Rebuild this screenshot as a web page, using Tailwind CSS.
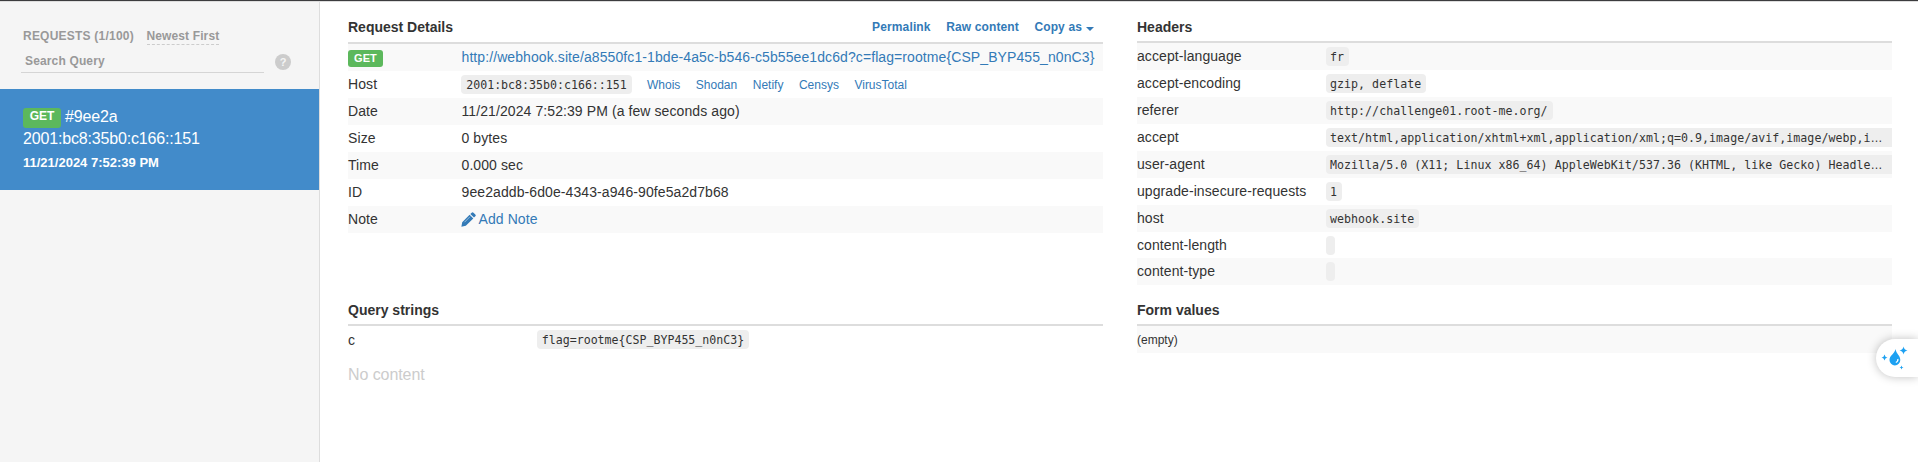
<!DOCTYPE html>
<html lang="en">
<head>
<meta charset="utf-8">
<title>Webhook requests</title>
<script src="https://cdn.jsdelivr.net/npm/@tailwindcss/browser@4"></script>
</head>
<body class="bg-white text-[#333] font-['Liberation_Sans',Arial,sans-serif] text-sm overflow-hidden">
<div class="h-[462px] flex flex-col border-t border-[#3c3c3e] relative overflow-hidden">
<div class="flex-1 flex border-t border-[#ddd]">
  <aside class="w-80 shrink-0 bg-[#f5f5f5] border-r border-[#ddd]">
    <div class="h-[87px] pt-[25px] pl-[21px] text-xs font-bold text-[#999]">
      <div class="flex h-[18px] leading-[18px] pl-[2px]">
        <span class="w-[123.5px] tracking-[0.22px] whitespace-nowrap">REQUESTS (1/100)</span>
        <span class="tracking-[0.12px] border-b border-dashed border-[#ccc]">Newest First</span>
      </div>
      <div class="flex pt-[4px]">
        <div class="w-[243px] h-6 leading-[24px] pl-1 tracking-[0.15px] border-b border-[#d5d5d5]">Search Query</div>
        <div class="ml-[11px] mt-[5px] size-4 rounded-full bg-[#ccc] text-[#f5f5f5] text-[11px] leading-4 text-center">?</div>
      </div>
    </div>
    <div class="h-[101px] bg-[#428bca] text-white pl-[23px] pt-[17px]">
      <div class="flex items-start text-base leading-[22px] tracking-[-0.15px]">
        <span class="mt-[2px] mr-1 w-[38px] h-5 rounded-[3px] bg-[#5cb85c] text-xs font-bold leading-[17px] text-center tracking-normal">GET</span>
        <span>#9ee2a</span>
      </div>
      <div class="text-base leading-[22px] tracking-[-0.17px]">2001:bc8:35b0:c166::151</div>
      <div class="text-[13px] font-bold leading-[26px]">11/21/2024 7:52:39 PM</div>
    </div>
  </aside>
  <main class="pl-7 flex gap-[34px]">
    <section class="w-[755px]">
      <div class="h-[42px] border-b-2 border-[#ddd] flex items-end pb-[5px] leading-5 font-bold">
        <h2 class="flex-1">Request Details</h2>
        <div class="flex gap-[15.5px] text-xs leading-[19px] tracking-[0.13px] pr-[9px] text-[#337ab7]">
          <a>Permalink</a><a>Raw content</a>
          <a class="flex items-center">Copy as<svg class="ml-1 mt-[2px]" width="8" height="4"><path d="M0 0h8L4 4z" fill="#337ab7"/></svg></a>
        </div>
      </div>
      <dl class="leading-[27px] tracking-[0.09px]">
        <div class="h-[27px] flex bg-[#f9f9f9]"><dt class="w-[113.5px]"><span class="block mt-[6px] w-[35px] h-[17px] rounded-[3px] bg-[#5cb85c] text-white text-[11px] font-bold leading-[17px] text-center">GET</span></dt><dd class="text-[#337ab7] whitespace-nowrap">http://webhook.site/a8550fc1-1bde-4a5c-b546-c5b55ee1dc6d?c=flag=rootme{CSP_BYP455_n0nC3}</dd></div>
        <div class="h-[27px] flex"><dt class="w-[113px]">Host</dt><dd class="flex items-center text-[#337ab7] text-xs tracking-normal"><code class="h-[19px] w-[171px] text-center mr-[15px] bg-[#eee] text-[#333] rounded-[4px] font-['DejaVu_Sans_Mono',monospace] text-[11.6px] leading-[20px]">2001:bc8:35b0:c166::151</code><span class="flex gap-[15.5px]"><a>Whois</a><a>Shodan</a><a>Netify</a><a>Censys</a><a>VirusTotal</a></span></dd></div>
        <div class="h-[27px] flex bg-[#f9f9f9]"><dt class="w-[113.5px]">Date</dt><dd>11/21/2024 7:52:39 PM (a few seconds ago)</dd></div>
        <div class="h-[27px] flex"><dt class="w-[113.5px]">Size</dt><dd>0 bytes</dd></div>
        <div class="h-[27px] flex bg-[#f9f9f9]"><dt class="w-[113.5px]">Time</dt><dd>0.000 sec</dd></div>
        <div class="h-[27px] flex"><dt class="w-[113.5px]">ID</dt><dd>9ee2addb-6d0e-4343-a946-90fe5a2d7b68</dd></div>
        <div class="h-[27px] flex bg-[#f9f9f9]"><dt class="w-[113px]">Note</dt><dd class="flex items-center text-[#337ab7]"><svg class="mr-[2.5px]" width="15" height="15" viewBox="0 0 15 15" fill="#337ab7"><path d="M10.7.8q.9-.9 1.8 0l1.800 1.800q.9.9 0 1.700L13 5.600 9.300 2zM8.600 2.700l3.700 3.700-7.500 7.400L.4 14.800l.8-4.500z"/><path d="M3.500 10.200l5.500-5.500" stroke="#fff" stroke-width=".5"/></svg><a>Add Note</a></dd></div>
      </dl>
      <div class="h-[93px] border-b-2 border-[#ddd] flex items-end pb-[4px] leading-5 font-bold"><h2>Query strings</h2></div>
      <div class="h-[27px] flex items-center"><span class="w-[189px] text-sm">c</span><code class="h-[19px] w-[212px] text-center bg-[#eee] rounded-[4px] font-['DejaVu_Sans_Mono',monospace] text-[11.6px] leading-[20px]">flag=rootme{CSP_BYP455_n0nC3}</code></div>
      <p class="mt-[10px] text-base leading-6 text-[#ccc] tracking-[-0.08px]">No content</p>
    </section>
    <section class="w-[755px]">
      <div class="h-[41px] border-b-2 border-[#ddd] flex items-end pb-[4px] leading-5 font-bold"><h2>Headers</h2></div>
      <dl id="headers" class="leading-[26px] tracking-[0.08px]"></dl>
      <div class="h-[41px] border-b-2 border-[#ddd] flex items-end pb-[4px] leading-5 font-bold"><h2>Form values</h2></div>
      <div class="h-[27px] bg-[#f9f9f9] text-xs leading-[28px]">(empty)</div>
    </section>
  </main>
</div>
<div class="absolute right-0 top-[338px] w-[42px] h-[38px] rounded-l-full bg-white shadow-[0_0_10px_rgba(0,0,0,0.25)]">
  <svg width="42" height="38" viewBox="0 0 42 38" fill="#1da1f2"><path d="M19.500 10c.8 5 4.800 6.500 4.800 11a5.400 5.400 0 0 1-10.800 0c0-4.500 5-6 6-11z"/><path d="M27.500 7.500q.6 3.400 4 4-3.400.6-4 4-.6-3.400-4-4 3.400-.6 4-4zM8.500 15.500q.4 2.600 3 3-2.600.4-3 3-.4-2.600-3-3 2.600-.4 3-3zM25.500 26.500q.2 1.800 2 2-1.800.2-2 2-.2-1.800-2-2 1.800-.2 2-2z"/><path d="M21.800 20q.5 2.500-2 3.500" stroke="#fff" stroke-width="1.300" fill="none"/></svg>
</div>
</div>
<script>
const headers = [
  ['accept-language', 'fr'],
  ['accept-encoding', 'gzip, deflate'],
  ['referer', 'http://challenge01.root-me.org/'],
  ['accept', 'text/html,application/xhtml+xml,application/xml;q=0.9,image/avif,image/webp,i', true],
  ['user-agent', 'Mozilla/5.0 (X11; Linux x86_64) AppleWebKit/537.36 (KHTML, like Gecko) Headle', true],
  ['upgrade-insecure-requests', '1'],
  ['host', 'webhook.site'],
  ['content-length', ''],
  ['content-type', '']
];
const dots = `<span class="font-['Liberation_Sans',sans-serif] text-[12px]">…</span>`;
document.getElementById('headers').innerHTML = headers.map(([k, v, cut], i) =>
  `<div class="${i === 7 ? 'h-[26px]' : 'h-[27px]'} flex ${i % 2 ? '' : 'bg-[#f9f9f9]'}"><dt class="w-[189px] shrink-0">${k}</dt><dd class="flex-1 min-w-0 pt-1"><code class="block h-[19px] ${cut ? 'w-full rounded-l-[4px]' : 'w-fit pr-[5px] rounded-[4px]'} pl-1 whitespace-nowrap bg-[#eee] font-['DejaVu_Sans_Mono',monospace] text-[11.6px] tracking-[0.04px] leading-[20px]">${v}${cut ? dots : ''}</code></dd></div>`
).join('');
</script>
</body>
</html>
